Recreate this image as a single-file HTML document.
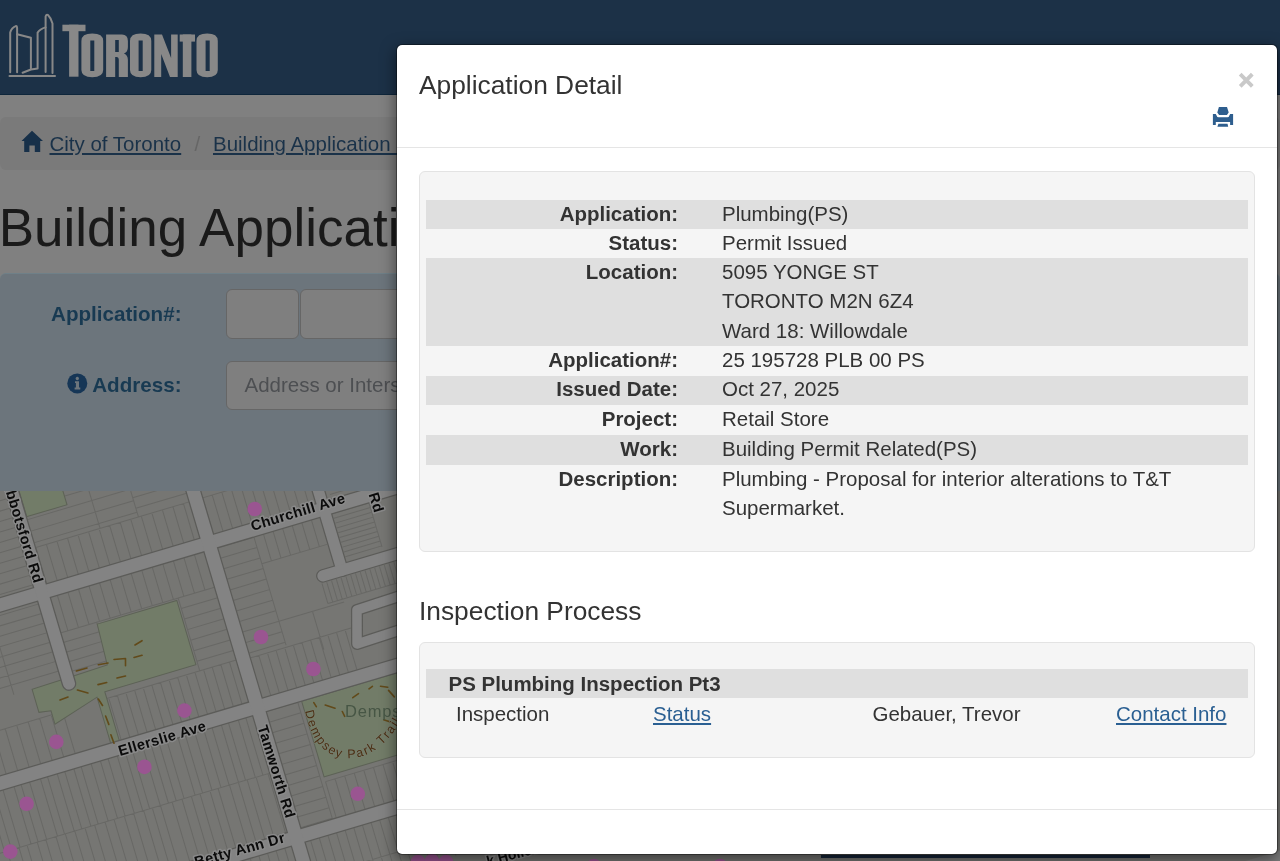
<!DOCTYPE html>
<html><head><meta charset="utf-8">
<style>
html,body{margin:0;padding:0;width:1280px;height:861px;overflow:hidden;background:#808080;font-family:"Liberation Sans",sans-serif;}
.abs{position:absolute;}
#hdr{left:0;top:0;width:1280px;height:94px;background:#1c3147;border-bottom:1px solid #0e263b;}
#bc{left:0;top:117px;width:1280px;height:53px;background:#7a7a7a;border-radius:6px;}
.lnk{color:#1a3249;text-decoration:underline;font-size:20.49px;line-height:29.27px;white-space:nowrap;}
#h1{left:-1.3px;top:198.4px;font-size:53px;line-height:58px;color:#1a1a1a;white-space:nowrap;transform:scaleY(1.02);transform-origin:0 0;}
#search{left:0;top:273px;width:1280px;height:218px;background:#6c757c;border-top:1px solid #6f8088;border-radius:6px 6px 0 0;}
.slbl{font-weight:bold;color:#183a52;font-size:20.6px;line-height:29.27px;white-space:nowrap;}
.inp{background:#7f7f7f;border:1px solid #666;border-radius:6px;box-sizing:border-box;}
#map{left:0;top:0;width:1280px;height:861px;overflow:hidden;}
#modal{left:396px;top:44px;width:882px;height:811px;box-sizing:border-box;background:#fff;border:1px solid rgba(0,0,0,.35);background-clip:padding-box;border-radius:6px;box-shadow:0 5px 15px rgba(0,0,0,.5);color:#333;}
.t{position:absolute;white-space:nowrap;font-size:20.49px;line-height:29.27px;}
.b{font-weight:bold;}
.r{text-align:right;}
.well{position:absolute;background:#f5f5f5;border:1px solid #e3e3e3;border-radius:6px;box-sizing:border-box;}
.band{position:absolute;background:#dfdfdf;}
.ml{color:#2a5f92;text-decoration:underline;}
</style></head><body><div id="root" style="position:absolute;left:0;top:0;width:1280px;height:861px;will-change:transform;">
<div id="hdr" class="abs">
<svg width="230" height="95" viewBox="0 0 230 95" style="position:absolute;left:0;top:0">
  <g fill="none" stroke="#888" stroke-width="2" stroke-linejoin="round" stroke-linecap="round">
    <path d="M10.2,72.3 L10.2,32.6 Q11.5,27.5 16.2,25.9 Q17.1,26 17.1,28 L17.1,72.3"/>
    <path d="M17.1,34.2 L30.9,37.8 L30.9,68.5"/>
    <path d="M22.6,72.7 L30.9,69.5 L37.6,68.5 L37.6,32.6 Q40,29 45.6,27.4"/>
    <path d="M45.6,72 L45.6,16.5 Q46.5,14 48,15 Q51,18 52.5,23.4 L52.5,73"/>
    <path d="M9.5,76 L55,76"/>
  </g>
  <g fill="#888">
    <rect x="62.4" y="24.7" width="23.1" height="6.5"/>
    <rect x="69.1" y="24.7" width="9.4" height="52"/>
    <path fill-rule="evenodd" d="M81.4,41 Q81.4,33.6 92.3,33.6 Q103.2,33.6 103.2,41 L103.2,70 Q103.2,77.2 92.3,77.2 Q81.4,77.2 81.4,70 Z M90.3,40.5 L94.3,40.5 L94.3,71 L90.3,71 Z"/>
    <path fill-rule="evenodd" d="M106.1,34.5 L122,34.5 Q127.9,34.5 127.9,41 L127.9,47 Q127.9,52 124,53.5 Q127.9,55 127.9,60 L127.9,77 L118.8,77 L118.8,60 Q118.8,57 116.5,57 L115.2,57 L115.2,77 L106.1,77 Z M115.2,40 L118.8,40 L118.8,52 L115.2,52 Z"/>
    <path fill-rule="evenodd" d="M130,41 Q130,33.6 140.6,33.6 Q151.3,33.6 151.3,41 L151.3,70 Q151.3,77.2 140.6,77.2 Q130,77.2 130,70 Z M138.6,40.5 L142.7,40.5 L142.7,71 L138.6,71 Z"/>
    <path d="M154.3,34.5 L162,34.5 L171.1,58 L171.1,34.5 L177.7,34.5 L177.7,77 L170,77 L161.2,54 L161.2,77 L154.3,77 Z"/>
    <rect x="179.7" y="34.5" width="15.3" height="7.1"/>
    <rect x="182.8" y="34.5" width="8.6" height="42.5"/>
    <path fill-rule="evenodd" d="M196.5,41 Q196.5,33.6 207.2,33.6 Q217.8,33.6 217.8,41 L217.8,70 Q217.8,77.2 207.2,77.2 Q196.5,77.2 196.5,70 Z M205.6,40.5 L209.7,40.5 L209.7,71 L205.6,71 Z"/>
  </g>
</svg>
</div>
<div id="bc" class="abs"></div>
<svg class="abs" style="left:21px;top:130px" width="23" height="23" viewBox="0 0 23 23">
  <path fill="#173049" d="M11,0.8 L22,11 L19.2,11 L19.2,22 L13.8,22 L13.8,15.5 L8.4,15.5 L8.4,22 L3.2,22 L3.2,11 L0.5,11 Z"/>
</svg>
<div class="abs lnk" style="left:49.5px;top:128.8px;">City of Toronto</div>
<div class="abs" style="left:194.5px;top:128.8px;font-size:20.49px;line-height:29.27px;color:#666;">/</div>
<div class="abs lnk" style="left:213px;top:128.8px;">Building Application Status</div>
<div id="h1" class="abs">Building Application Status</div>
<div id="search" class="abs"></div>
<div class="abs slbl" style="left:0;top:298.5px;width:181.5px;text-align:right;">Application#:</div>
<div class="abs slbl" style="left:0;top:370px;width:181.5px;text-align:right;">Address:</div>
<svg class="abs" style="left:67px;top:373px" width="21" height="21" viewBox="0 0 21 21">
  <circle cx="10.3" cy="10.4" r="10" fill="#163656"/>
  <path fill="#6c757c" d="M8,8.2 L12,8.2 L12,14.6 L13.3,14.6 L13.3,16.4 L7.6,16.4 L7.6,14.6 L8.9,14.6 L8.9,10 L8,10 Z M10.3,3.8 A1.7,1.7 0 1 1 10.29,3.8 Z"/>
</svg>
<div class="abs inp" style="left:225.8px;top:289px;width:73.6px;height:49.5px;"></div>
<div class="abs inp" style="left:299.8px;top:289px;width:200px;height:49.5px;"></div>
<div class="abs inp" style="left:225.8px;top:361px;width:400px;height:49px;"></div>
<div class="abs" style="left:244.5px;top:369.7px;font-size:20.49px;line-height:29.27px;color:#4d4f52;white-space:nowrap;">Address or Intersection</div>
<div id="map" class="abs"><svg class="abs" style="left:0;top:491px" width="1280" height="370" viewBox="0 491 1280 370"><g transform="translate(208.75,543.0) rotate(-16.541)"><rect x="-600" y="-300" width="1800" height="900" fill="#767673"/><path d="M-160.0,7.0V44.0M-149.0,7.0V44.0M-138.0,7.0V44.0M-127.0,7.0V44.0M-116.0,7.0V44.0M-105.0,7.0V44.0M-94.0,7.0V44.0M-83.0,7.0V44.0M-72.0,7.0V44.0M-61.0,7.0V44.0M-50.0,7.0V44.0M-39.0,7.0V44.0M-28.0,7.0V44.0M-17.0,7.0V44.0M-167.0,44.0H-7.0M-45.0,44.0H-7.0M-45.0,55.0H-7.0M-45.0,66.0H-7.0M-45.0,77.0H-7.0M-45.0,88.0H-7.0M-45.0,99.0H-7.0M-45.0,110.0H-7.0M-45.0,44.0V120.0M-167.0,44.0H-130.0M-167.0,54.0H-130.0M-167.0,64.0H-130.0M-167.0,74.0H-130.0M-167.0,84.0H-130.0M-130.0,44.0V90.0M-140.0,120.0V164.0M-131.0,120.0V164.0M-122.0,120.0V164.0M-113.0,120.0V164.0M-104.0,120.0V164.0M-95.0,120.0V164.0M-86.0,120.0V164.0M-77.0,120.0V164.0M-68.0,120.0V164.0M-59.0,120.0V164.0M-50.0,120.0V164.0M-41.0,120.0V164.0M-32.0,120.0V164.0M-23.0,120.0V164.0M-14.0,120.0V164.0M-142.0,120.0H-7.0M-320.0,-120.0H-181.0M-320.0,-110.0H-181.0M-320.0,-100.0H-181.0M-320.0,-90.0H-181.0M-320.0,-80.0H-181.0M-320.0,-70.0H-181.0M-320.0,-60.0H-181.0M-320.0,-50.0H-181.0M-320.0,-40.0H-181.0M-320.0,-30.0H-181.0M-320.0,-20.0H-181.0M-320.0,-10.0H-181.0M-320.0,0.0H-181.0M-320.0,10.0H-181.0M-320.0,20.0H-181.0M-320.0,30.0H-181.0M-320.0,40.0H-181.0M-320.0,50.0H-181.0M-320.0,60.0H-181.0M-320.0,70.0H-181.0M-320.0,80.0H-181.0M-230.0,-120.0V90.0M-320.0,120.0V164.0M-308.0,120.0V164.0M-296.0,120.0V164.0M-284.0,120.0V164.0M-272.0,120.0V164.0M-260.0,120.0V164.0M-248.0,120.0V164.0M-236.0,120.0V164.0M-224.0,120.0V164.0M-212.0,120.0V164.0M-200.0,120.0V164.0M-188.0,120.0V164.0M-320.0,120.0H-181.0M-167.0,-110.0H-60.0M-167.0,-98.0H-60.0M-167.0,-86.0H-60.0M-167.0,-74.0H-60.0M-167.0,-62.0H-60.0M-167.0,-50.0H-60.0M-100.0,-130.0V-45.0M-60.0,-130.0V-45.0M-167.0,-45.0V-7.0M-156.0,-45.0V-7.0M-145.0,-45.0V-7.0M-134.0,-45.0V-7.0M-123.0,-45.0V-7.0M-112.0,-45.0V-7.0M-101.0,-45.0V-7.0M-90.0,-45.0V-7.0M-79.0,-45.0V-7.0M-68.0,-45.0V-7.0M-57.0,-45.0V-7.0M-46.0,-45.0V-7.0M-35.0,-45.0V-7.0M-24.0,-45.0V-7.0M-13.0,-45.0V-7.0M-167.0,-45.0H-7.0M-60.0,-120.0H-7.0M-60.0,-109.0H-7.0M-60.0,-98.0H-7.0M-60.0,-87.0H-7.0M-60.0,-76.0H-7.0M-60.0,-65.0H-7.0M-60.0,-54.0H-7.0M7.0,-45.0V-7.0M17.0,-45.0V-7.0M27.0,-45.0V-7.0M37.0,-45.0V-7.0M47.0,-45.0V-7.0M57.0,-45.0V-7.0M67.0,-45.0V-7.0M77.0,-45.0V-7.0M87.0,-45.0V-7.0M97.0,-45.0V-7.0M107.0,-45.0V-7.0M117.0,-45.0V-7.0M7.0,-45.0H165.0M130.0,-120.0H165.0M130.0,-111.0H165.0M130.0,-102.0H165.0M130.0,-93.0H165.0M130.0,-84.0H165.0M130.0,-75.0H165.0M130.0,-66.0H165.0M130.0,-57.0H165.0M130.0,-48.0H165.0M130.0,-39.0H165.0M130.0,-30.0H165.0M130.0,-21.0H165.0M130.0,-12.0H165.0M7.0,7.0H45.0M7.0,18.0H45.0M7.0,29.0H45.0M7.0,40.0H45.0M7.0,51.0H45.0M7.0,62.0H45.0M7.0,73.0H45.0M7.0,84.0H45.0M7.0,95.0H45.0M7.0,106.0H45.0M7.0,117.0H45.0M45.0,7.0V120.0M45.0,7.0V35.0M55.0,7.0V35.0M65.0,7.0V35.0M75.0,7.0V35.0M85.0,7.0V35.0M95.0,7.0V35.0M105.0,7.0V35.0M45.0,35.0H113.0M16.0,122.0V164.0M25.0,122.0V164.0M34.0,122.0V164.0M43.0,122.0V164.0M52.0,122.0V164.0M61.0,122.0V164.0M70.0,122.0V164.0M79.0,122.0V164.0M88.0,122.0V164.0M97.0,122.0V164.0M106.0,122.0V164.0M7.0,122.0H113.0M45.0,95.0H113.0M80.0,95.0V135.0M127.0,7.0H165.0M127.0,12.0H165.0M127.0,17.0H165.0M127.0,22.0H165.0M127.0,27.0H165.0M127.0,32.0H165.0M127.0,37.0H165.0M127.0,42.0H165.0M127.0,47.0H165.0M127.0,52.0H165.0M165.0,7.0V53.0M97.0,71.0V92.0M102.0,71.0V92.0M107.0,71.0V92.0M112.0,71.0V92.0M117.0,71.0V92.0M122.0,71.0V92.0M127.0,71.0V92.0M132.0,71.0V92.0M137.0,71.0V92.0M142.0,71.0V92.0M147.0,71.0V92.0M152.0,71.0V92.0M157.0,71.0V92.0M162.0,71.0V92.0M167.0,71.0V92.0M172.0,71.0V92.0M177.0,71.0V92.0M182.0,71.0V92.0M187.0,71.0V92.0M192.0,71.0V92.0M197.0,71.0V92.0M202.0,71.0V92.0M207.0,71.0V92.0M212.0,71.0V92.0M217.0,71.0V92.0M222.0,71.0V92.0M227.0,71.0V92.0M232.0,71.0V92.0M237.0,71.0V92.0M242.0,71.0V92.0M247.0,71.0V92.0M252.0,71.0V92.0M257.0,71.0V92.0M97.0,92.0H260.0M-320.8,178.0V238.0M-310.9,178.0V238.0M-302.4,178.0V238.0M-292.7,178.0V238.0M-283.6,178.0V238.0M-276.3,178.0V238.0M-267.5,178.0V238.0M-256.0,178.0V238.0M-248.7,178.0V238.0M-239.8,178.0V238.0M-228.5,178.0V238.0M-221.1,178.0V238.0M-211.0,178.0V238.0M-203.1,178.0V238.0M-193.6,178.0V238.0M-186.0,178.0V238.0M-175.6,178.0V238.0M-165.9,178.0V238.0M-157.9,178.0V238.0M-148.3,178.0V238.0M-139.5,178.0V238.0M-132.3,178.0V238.0M-121.2,178.0V238.0M-112.7,178.0V238.0M-104.6,178.0V238.0M-96.4,178.0V238.0M-84.9,178.0V238.0M-77.1,178.0V238.0M-67.3,178.0V238.0M-57.9,178.0V238.0M-49.4,178.0V238.0M-39.7,178.0V238.0M-32.3,178.0V238.0M-22.1,178.0V238.0M-14.2,178.0V238.0M-320.0,238.0H-7.0M-318.7,238.0V300.0M-308.9,238.0V300.0M-301.2,238.0V300.0M-291.1,238.0V300.0M-280.8,238.0V300.0M-268.6,238.0V300.0M-260.2,238.0V300.0M-249.6,238.0V300.0M-240.6,238.0V300.0M-230.0,238.0V300.0M-220.3,238.0V300.0M-210.4,238.0V300.0M-199.7,238.0V300.0M-189.7,238.0V300.0M-178.8,238.0V300.0M-169.5,238.0V300.0M-158.7,238.0V300.0M-148.9,238.0V300.0M-138.5,238.0V300.0M-129.5,238.0V300.0M-121.0,238.0V300.0M-108.9,238.0V300.0M-98.6,238.0V300.0M-88.8,238.0V300.0M-79.8,238.0V300.0M-69.4,238.0V300.0M-60.9,238.0V300.0M-49.0,238.0V300.0M-39.8,238.0V300.0M-30.6,238.0V300.0M-21.3,238.0V300.0M-8.9,238.0V300.0M7.0,178.0H40.0M7.0,189.0H40.0M7.0,200.0H40.0M7.0,211.0H40.0M7.0,222.0H40.0M7.0,233.0H40.0M7.0,244.0H40.0M7.0,255.0H40.0M7.0,266.0H40.0M7.0,277.0H40.0M7.0,288.0H40.0M7.0,299.0H40.0M40.0,178.0V300.0M44.0,262.0V300.0M54.0,262.0V300.0M64.0,262.0V300.0M74.0,262.0V300.0M84.0,262.0V300.0M94.0,262.0V300.0M104.0,262.0V300.0M114.0,262.0V300.0M124.0,262.0V300.0M134.0,262.0V300.0M144.0,262.0V300.0M154.0,262.0V300.0M164.0,262.0V300.0M174.0,262.0V300.0M184.0,262.0V300.0M194.0,262.0V300.0M204.0,262.0V300.0M214.0,262.0V300.0M224.0,262.0V300.0M234.0,262.0V300.0M244.0,262.0V300.0M254.0,262.0V300.0M44.0,262.0H260.0M-320.0,314.0V370.0M-311.0,314.0V370.0M-302.0,314.0V370.0M-293.0,314.0V370.0M-284.0,314.0V370.0M-275.0,314.0V370.0M-266.0,314.0V370.0M-257.0,314.0V370.0M-248.0,314.0V370.0M-239.0,314.0V370.0M-230.0,314.0V370.0M-221.0,314.0V370.0M-212.0,314.0V370.0M-203.0,314.0V370.0M-194.0,314.0V370.0M-185.0,314.0V370.0M-176.0,314.0V370.0M-167.0,314.0V370.0M-158.0,314.0V370.0M-149.0,314.0V370.0M-140.0,314.0V370.0M-131.0,314.0V370.0M-122.0,314.0V370.0M-113.0,314.0V370.0M-104.0,314.0V370.0M-95.0,314.0V370.0M-86.0,314.0V370.0M-77.0,314.0V370.0M-68.0,314.0V370.0M-59.0,314.0V370.0M-50.0,314.0V370.0M-41.0,314.0V370.0M-32.0,314.0V370.0M-23.0,314.0V370.0M-14.0,314.0V370.0M-5.0,314.0V370.0M4.0,314.0V370.0M13.0,314.0V370.0M22.0,314.0V370.0M31.0,314.0V370.0M40.0,314.0V370.0M49.0,314.0V370.0M58.0,314.0V370.0M67.0,314.0V370.0M76.0,314.0V370.0M85.0,314.0V370.0M94.0,314.0V370.0M103.0,314.0V370.0M112.0,314.0V370.0M121.0,314.0V370.0M130.0,314.0V370.0M139.0,314.0V370.0M148.0,314.0V370.0M157.0,314.0V370.0M166.0,314.0V370.0M175.0,314.0V370.0M184.0,314.0V370.0M193.0,314.0V370.0M202.0,314.0V370.0M211.0,314.0V370.0M220.0,314.0V370.0M229.0,314.0V370.0M238.0,314.0V370.0M247.0,314.0V370.0M256.0,314.0V370.0M-320.0,350.0H260.0" stroke="#686865" stroke-width="1" fill="none"/><polygon points="-130,46 -47,46 -47,113 -142,113 -142,166 -151,166 -151,116 -199,130 -199,116 -211,114 -211,90 -166,89 -132,88" fill="#727c68" stroke="#5d6256" stroke-width="1"/><polygon points="-167,-140 -125,-140 -125,-77 -167,-77" fill="#727c68" stroke="#5d6256" stroke-width="1"/><polygon points="44,178 260,178 260,257 44,257" fill="#727c68" stroke="#5d6256" stroke-width="1"/><path d="M-700,0H700" stroke="#5c5c59" stroke-width="15.5" fill="none" stroke-linecap="round"/><path d="M-700,171H700" stroke="#5c5c59" stroke-width="15.5" fill="none" stroke-linecap="round"/><path d="M-700,307H700" stroke="#5c5c59" stroke-width="15.5" fill="none" stroke-linecap="round"/><path d="M0,-400V500" stroke="#5c5c59" stroke-width="15.5" fill="none" stroke-linecap="round"/><path d="M-174,-400V95" stroke="#5c5c59" stroke-width="14.5" fill="none" stroke-linecap="round"/><path d="M120,-400V64" stroke="#5c5c59" stroke-width="13.5" fill="none" stroke-linecap="round"/><path d="M100,64H300" stroke="#5c5c59" stroke-width="13.5" fill="none" stroke-linecap="round"/><path d="M172,-400V-7" stroke="#5c5c59" stroke-width="13.5" fill="none" stroke-linecap="round"/><path d="M-700,0H700" stroke="#838383" stroke-width="13" fill="none" stroke-linecap="round"/><path d="M-700,171H700" stroke="#838383" stroke-width="13" fill="none" stroke-linecap="round"/><path d="M-700,307H700" stroke="#838383" stroke-width="13" fill="none" stroke-linecap="round"/><path d="M0,-400V500" stroke="#838383" stroke-width="13" fill="none" stroke-linecap="round"/><path d="M-174,-400V95" stroke="#838383" stroke-width="12" fill="none" stroke-linecap="round"/><path d="M120,-400V64" stroke="#838383" stroke-width="11" fill="none" stroke-linecap="round"/><path d="M100,64H300" stroke="#838383" stroke-width="11" fill="none" stroke-linecap="round"/><path d="M172,-400V-7" stroke="#838383" stroke-width="11" fill="none" stroke-linecap="round"/><path d="M168.2,105.3L123.0,106.4L113.4,139.0L158.6,137.8" stroke="#5c5c59" stroke-width="12" fill="none" stroke-linejoin="round" stroke-linecap="round"/><path d="M168.2,105.3L123.0,106.4L113.4,139.0L158.6,137.8" stroke="#838383" stroke-width="9.5" fill="none" stroke-linejoin="round" stroke-linecap="round"/></g><path d="M76.4,671L87,668M98.3,664.7L108,663M114,659.5L125.5,658.5M125.5,658.5L125.5,665.8M134,657.4L142,655.3M135,645L142,640.7M117,678L125.5,676M98,684.6L106.7,682.5M77.4,690L87.9,693M98.3,699L102.5,705.5M105.6,716L108.8,724.4M110.9,734.8L114,743.2M313.8,702.6L316.3,706.7M325.2,705L335,708.3M342.3,711.5L344.7,716.4M352.8,697.7L358.5,693.7M369,688.8L372.4,686.3M380.5,686.3L387.8,687.2M388.6,690.4L394.3,696.9M383.7,719.7L393.5,723M60,700L68,697" stroke="#624a1a" stroke-width="1.6" fill="none" stroke-linecap="round"/><rect x="821" y="855" width="329" height="3" fill="#17263a"/><text x="488" y="866" transform="rotate(-15 488 866)" font-family="Liberation Sans" font-size="14" font-weight="bold" fill="#0b0b0b" stroke="#8a8a8a" stroke-width="3" paint-order="stroke">k Hollow</text><circle cx="254.7" cy="509" r="7.3" fill="#9a5591"/><circle cx="261" cy="637" r="7.3" fill="#9a5591"/><circle cx="313.4" cy="669" r="7.3" fill="#9a5591"/><circle cx="184.4" cy="710.6" r="7.3" fill="#9a5591"/><circle cx="56.3" cy="741.9" r="7.3" fill="#9a5591"/><circle cx="144.4" cy="766.9" r="7.3" fill="#9a5591"/><circle cx="26.6" cy="803.8" r="7.3" fill="#9a5591"/><circle cx="357.8" cy="793.8" r="7.3" fill="#9a5591"/><circle cx="10.3" cy="851.6" r="7.3" fill="#9a5591"/><circle cx="418" cy="862" r="7.3" fill="#9a5591"/><circle cx="432" cy="861" r="7.3" fill="#9a5591"/><circle cx="446" cy="862" r="7.3" fill="#9a5591"/><circle cx="594" cy="866" r="7.3" fill="#9a5591"/><circle cx="720" cy="866" r="7.3" fill="#9a5591"/><text x="252.5" y="531" transform="rotate(-17.00 252.5 531)" font-family="Liberation Sans" font-size="14.6" fill="#0b0b0b" stroke="#8a8a8a" stroke-width="3" paint-order="stroke" stroke-linejoin="round" font-weight="bold" letter-spacing="0.4">Churchill Ave</text><text x="2.5" y="481.5" transform="rotate(73.00 2.5 481.5)" font-family="Liberation Sans" font-size="14.6" fill="#0b0b0b" stroke="#8a8a8a" stroke-width="3" paint-order="stroke" stroke-linejoin="round" font-weight="bold" letter-spacing="0.4">Abbotsford Rd</text><text x="364.5" y="481" transform="rotate(73.00 364.5 481)" font-family="Liberation Sans" font-size="14.6" fill="#0b0b0b" stroke="#8a8a8a" stroke-width="3" paint-order="stroke" stroke-linejoin="round" font-weight="bold" letter-spacing="0.4">d Rd</text><text x="120" y="756" transform="rotate(-16.50 120 756)" font-family="Liberation Sans" font-size="14.6" fill="#0b0b0b" stroke="#8a8a8a" stroke-width="3" paint-order="stroke" stroke-linejoin="round" font-weight="bold" letter-spacing="0.4">Ellerslie Ave</text><text x="257.5" y="727" transform="rotate(72.80 257.5 727)" font-family="Liberation Sans" font-size="14.6" fill="#0b0b0b" stroke="#8a8a8a" stroke-width="3" paint-order="stroke" stroke-linejoin="round" font-weight="bold" letter-spacing="0.4">Tamworth Rd</text><text x="196" y="867" transform="rotate(-15.60 196 867)" font-family="Liberation Sans" font-size="14.6" fill="#0b0b0b" stroke="#8a8a8a" stroke-width="3" paint-order="stroke" stroke-linejoin="round" font-weight="bold" letter-spacing="0.4">Betty Ann Dr</text><g font-family="Liberation Sans" font-size="12.5" fill="#4a2f12" stroke="#7a7f72" stroke-width="1" paint-order="stroke"><text x="306.0" y="715.4" transform="rotate(76.4 306.0 715.4)" text-anchor="middle">D</text><text x="308.6" y="724.6" transform="rotate(71.1 308.6 724.6)" text-anchor="middle">e</text><text x="312.6" y="734.1" transform="rotate(63.3 312.6 734.1)" text-anchor="middle">m</text><text x="317.9" y="742.9" transform="rotate(52.9 317.9 742.9)" text-anchor="middle">p</text><text x="323.5" y="748.9" transform="rotate(41.4 323.5 748.9)" text-anchor="middle">s</text><text x="330.2" y="753.6" transform="rotate(28.6 330.2 753.6)" text-anchor="middle">e</text><text x="337.8" y="756.6" transform="rotate(15.3 337.8 756.6)" text-anchor="middle">y</text><text x="351.6" y="758.0" transform="rotate(-2.5 351.6 758.0)" text-anchor="middle">P</text><text x="360.7" y="756.5" transform="rotate(-14.7 360.7 756.5)" text-anchor="middle">a</text><text x="367.5" y="754.2" transform="rotate(-23.5 367.5 754.2)" text-anchor="middle">r</text><text x="373.5" y="751.0" transform="rotate(-31.3 373.5 751.0)" text-anchor="middle">k</text><text x="384.2" y="742.7" transform="rotate(-44.1 384.2 742.7)" text-anchor="middle">T</text><text x="389.3" y="737.2" transform="rotate(-49.7 389.3 737.2)" text-anchor="middle">r</text><text x="393.8" y="731.6" transform="rotate(-53.9 393.8 731.6)" text-anchor="middle">a</text><text x="397.4" y="726.2" transform="rotate(-57.4 397.4 726.2)" text-anchor="middle">i</text><text x="399.7" y="722.5" transform="rotate(-59.3 399.7 722.5)" text-anchor="middle">l</text></g><text x="345" y="717" font-family="Liberation Sans" font-size="16.5" fill="#475645" letter-spacing="0.8">Demps</text></svg></div>

<div id="modal" class="abs">
  <!-- coordinates inside modal: origin at 397,45 (padding box) -->
  <div class="t" style="left:22px;top:22px;font-size:26.34px;line-height:37.63px;">Application Detail</div>
  
  <div class="abs" style="left:0;top:102px;width:880px;height:1px;background:#e5e5e5;"></div>
  <div class="well" style="left:22px;top:126px;width:836px;height:381px;"></div>
  <div class="band" style="left:29px;top:154.70px;width:822px;height:29.00px;"></div>
  <div class="t b r" style="left:29px;top:153.70px;width:252px;line-height:29.00px;">Application:</div>
  <div class="t" style="left:325px;top:153.70px;line-height:29.00px;">Plumbing(PS)</div>
  <div class="t b r" style="left:29px;top:182.70px;width:252px;line-height:29.30px;">Status:</div>
  <div class="t" style="left:325px;top:182.70px;line-height:29.30px;">Permit Issued</div>
  <div class="band" style="left:29px;top:213.00px;width:822px;height:88.20px;"></div>
  <div class="t b r" style="left:29px;top:212.00px;width:252px;line-height:29.40px;">Location:</div>
  <div class="t" style="left:325px;top:212.00px;line-height:29.40px;">5095 YONGE ST<br>TORONTO M2N 6Z4<br>Ward 18: Willowdale</div>
  <div class="t b r" style="left:29px;top:300.20px;width:252px;line-height:29.50px;">Application#:</div>
  <div class="t" style="left:325px;top:300.20px;line-height:29.50px;">25 195728 PLB 00 PS</div>
  <div class="band" style="left:29px;top:330.70px;width:822px;height:28.90px;"></div>
  <div class="t b r" style="left:29px;top:329.70px;width:252px;line-height:28.90px;">Issued Date:</div>
  <div class="t" style="left:325px;top:329.70px;line-height:28.90px;">Oct 27, 2025</div>
  <div class="t b r" style="left:29px;top:358.60px;width:252px;line-height:30.40px;">Project:</div>
  <div class="t" style="left:325px;top:358.60px;line-height:30.40px;">Retail Store</div>
  <div class="band" style="left:29px;top:390.00px;width:822px;height:29.70px;"></div>
  <div class="t b r" style="left:29px;top:389.00px;width:252px;line-height:29.70px;">Work:</div>
  <div class="t" style="left:325px;top:389.00px;line-height:29.70px;">Building Permit Related(PS)</div>
  <div class="t b r" style="left:29px;top:418.70px;width:252px;line-height:29.40px;">Description:</div>
  <div class="t" style="left:325px;top:418.70px;line-height:29.40px;">Plumbing - Proposal for interior alterations to T&amp;T<br>Supermarket.</div>
  <div class="t" style="left:22px;top:548.3px;font-size:26.34px;line-height:37.63px;">Inspection Process</div>
  <div class="well" style="left:22px;top:596.5px;width:836px;height:116px;"></div>
  <div class="band" style="left:29px;top:624.2px;width:822px;height:29.27px;"></div>
  <div class="t b" style="left:51.5px;top:624.2px;">PS Plumbing Inspection Pt3</div>
  <div class="t" style="left:59px;top:653.5px;">Inspection</div>
  <div class="t ml" style="left:256px;top:653.5px;">Status</div>
  <div class="t" style="left:475.5px;top:653.5px;">Gebauer, Trevor</div>
  <div class="t ml" style="left:719px;top:653.5px;">Contact Info</div>
  <div class="abs" style="left:0;top:764px;width:880px;height:1px;background:#e5e5e5;"></div>
</div>

<svg class="abs" style="left:0;top:0;" width="1280" height="861" viewBox="0 0 1280 861">
  <path d="M1241.6,75.6L1250.9,84.9M1250.9,75.6L1241.6,84.9" stroke="#c9c9c9" stroke-width="3.9" stroke-linecap="square" fill="none"/>
  <g fill="#2e5e8e">
    <polygon points="1218.9,106.9 1227,106.9 1228.7,112.4 1226.9,115 1219.1,115 1217.3,112.4"/>
    <path d="M1212.9,113.9 L1215.8,113.9 Q1217,117.3 1218.6,117.3 L1227.4,117.3 Q1229,117.3 1230.1,113.9 L1233.1,113.9 L1233.1,124.9 L1230.1,124.9 L1230.1,121.9 L1215.8,121.9 L1215.8,124.9 L1212.9,124.9 Z"/>
    <polygon points="1218.4,123.8 1227.5,123.8 1228.2,126.7 1217.4,126.7"/>
  </g>
</svg>
</div></body></html>
